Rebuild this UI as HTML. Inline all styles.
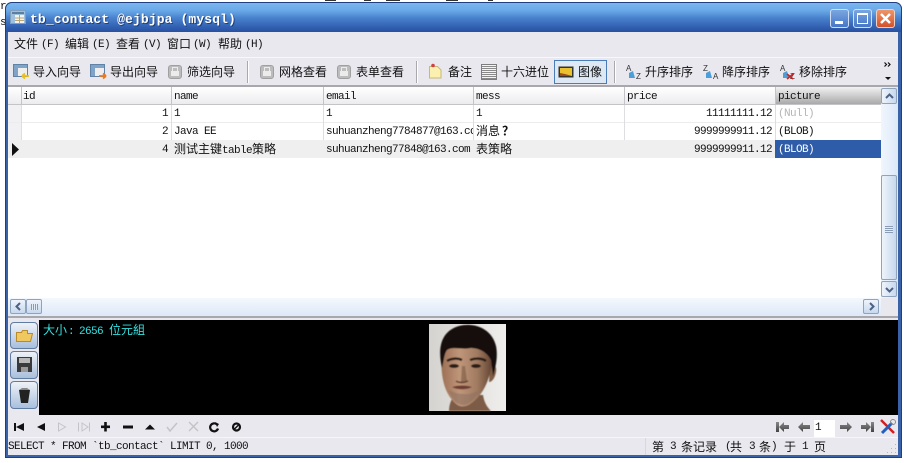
<!DOCTYPE html>
<html><head><meta charset="utf-8"><style>
html,body{margin:0;padding:0;width:904px;height:463px;overflow:hidden;background:#fff}
body{position:relative;font:12px "Liberation Mono","WenQuanYi Zen Hei","Noto Sans CJK SC",monospace;color:#111}
.a{position:absolute}
.t{position:absolute;white-space:nowrap;line-height:14px;height:14px}
.z{font-family:"WenQuanYi Zen Hei","Noto Sans CJK SC",sans-serif;font-size:12px}
.m{font-family:"Liberation Mono","WenQuanYi Zen Hei",monospace;font-size:11px;letter-spacing:-.6px}
.v{position:absolute;width:1px;background:#dedee2}
.h{position:absolute;width:1px;background:#c4c4c8;top:87px;height:17px}
.btn{position:absolute;box-sizing:border-box;border:1px solid #8fa3bd;border-radius:2px;background:linear-gradient(90deg,#eef4fb,#c7d8ee)}
.sep{position:absolute;width:1px;top:61px;height:22px;background:#a9a9ad;border-right:1px solid #fff}
svg{position:absolute;overflow:visible}
.lock{position:absolute;top:65px;width:14px;height:14px;background:#bcbcbc;border:1px solid #a0a0a0;border-radius:3px;box-sizing:border-box}
.lock:after{content:"";position:absolute;left:2px;top:5px;width:8px;height:5px;background:#ececec}
.lock:before{content:"";position:absolute;left:3px;top:1px;width:4px;height:3px;border:1px solid #ececec;border-bottom:0}
</style></head><body>
<div class="t m" style="left:0;top:0">r</div>
<div class="t m" style="left:0;top:16px">s</div>
<div class="a" style="left:325px;top:0;width:11px;height:1px;background:#333"></div>
<div class="a" style="left:364px;top:0;width:7px;height:1px;background:#333"></div>
<div class="a" style="left:386px;top:0;width:14px;height:1px;background:#333"></div>
<div class="a" style="left:446px;top:0;width:12px;height:1px;background:#333"></div>
<div class="a" style="left:488px;top:0;width:5px;height:1px;background:#333"></div>

<!-- window -->
<div class="a" style="left:5px;top:2px;width:897px;height:456px;background:#3a62a8;border-radius:7px 7px 0 0;box-shadow:0 0 0 1px #1f3f80 inset"></div>
<div class="a" style="left:6px;top:3px;width:895px;height:29px;border-radius:6px 6px 0 0;background:linear-gradient(#7bb6ee 0,#6aaae8 25%,#4a84cf 50%,#3565b6 78%,#2850a0 100%)"></div>
<div class="a" style="left:8px;top:32px;width:890px;height:423px;background:#e9e8ef"></div>

<!-- title -->
<svg style="left:10px;top:10px" width="16" height="14"><rect x=".5" y=".5" width="15" height="13" fill="#9fc0dc" stroke="#7f9fbe"/><rect x="2" y="2" width="12" height="2" fill="#5d7f9f"/><rect x="5" y="5" width="9" height="8" fill="#f4f4ef"/><path d="M5 8h9M5 10.500h9M9.500 5v8" stroke="#b9a77a"/></svg>
<div class="t" style="left:30px;top:12px;font:bold 13px 'Liberation Mono',monospace;letter-spacing:.12px;color:#fff;text-shadow:1px 1px 0 #1d3f7c">tb_contact @ejbjpa (mysql)</div>
<div class="a" style="left:830px;top:9px;width:19px;height:19px;box-sizing:border-box;border:1px solid #cfe0f5;border-radius:3px;background:linear-gradient(#7aa6e0,#4676c8)"><div class="a" style="left:4px;top:11px;width:8px;height:3px;background:#fff"></div></div>
<div class="a" style="left:853px;top:9px;width:19px;height:19px;box-sizing:border-box;border:1px solid #cfe0f5;border-radius:3px;background:linear-gradient(#7aa6e0,#4676c8)"><div class="a" style="left:3px;top:3px;width:11px;height:11px;box-sizing:border-box;border:1px solid #fff;border-top-width:2px"></div></div>
<div class="a" style="left:876px;top:9px;width:19px;height:19px;box-sizing:border-box;border:1px solid #f0d0c0;border-radius:3px;background:linear-gradient(#ee9668,#d4512a)"><svg style="left:3px;top:3px" width="11" height="11"><path d="M1 1l9 9M10 1L1 10" stroke="#fff" stroke-width="2.500"/></svg></div>

<!-- menu -->
<div class="t z" style="left:14px;top:37px">文件</div><div class="t m" style="left:41px;top:38px">(F)</div>
<div class="t z" style="left:65px;top:37px">编辑</div><div class="t m" style="left:92px;top:38px">(E)</div>
<div class="t z" style="left:116px;top:37px">查看</div><div class="t m" style="left:143px;top:38px">(V)</div>
<div class="t z" style="left:167px;top:37px">窗口</div><div class="t m" style="left:193px;top:38px">(W)</div>
<div class="t z" style="left:218px;top:37px">帮助</div><div class="t m" style="left:245px;top:38px">(H)</div>

<!-- toolbar -->
<div class="a" style="left:8px;top:57px;width:890px;height:1px;background:#f8f8fa"></div>
<svg style="left:13px;top:64px" width="17" height="16"><rect x=".5" y=".5" width="14" height="12" fill="#7fa4c8" stroke="#5f82a6"/><rect x="5" y="4" width="9" height="8" fill="#eee"/><path d="M9 12h7M9 12l3-2.500M9 12l3 2.500" stroke="#e8c020" stroke-width="1.800" fill="none"/></svg>
<div class="t z" style="left:33px;top:65px">导入向导</div>
<svg style="left:90px;top:64px" width="17" height="16"><rect x=".5" y=".5" width="14" height="12" fill="#7fa4c8" stroke="#5f82a6"/><rect x="5" y="4" width="9" height="8" fill="#eee"/><path d="M9 12h7M16 12l-3-2.500M16 12l-3 2.500" stroke="#e87a20" stroke-width="1.800" fill="none"/></svg>
<div class="t z" style="left:110px;top:65px">导出向导</div>
<div class="lock" style="left:168px"></div>
<div class="t z" style="left:187px;top:65px">筛选向导</div>
<div class="sep" style="left:247px"></div>
<div class="lock" style="left:260px"></div>
<div class="t z" style="left:279px;top:65px">网格查看</div>
<div class="lock" style="left:337px"></div>
<div class="t z" style="left:356px;top:65px">表单查看</div>
<div class="sep" style="left:416px"></div>
<svg style="left:429px;top:63px" width="13" height="16"><path d="M.5 3.500h8l3.500 3.500v8H.5z" fill="#fbf0b0" stroke="#c9b878"/><circle cx="4" cy="2.500" r="1.800" fill="#d04040"/></svg>
<div class="t z" style="left:448px;top:65px">备注</div>
<div class="a" style="left:481px;top:64px;width:16px;height:16px;box-sizing:border-box;border:1px solid #7d7d7d;background:repeating-linear-gradient(0deg,#8a8a8a 0 1px,#f4f4f4 1px 2px)"></div>
<div class="t z" style="left:501px;top:65px">十六进位</div>
<div class="a" style="left:554px;top:60px;width:53px;height:24px;box-sizing:border-box;border:1px solid #4a7cb8;background:#dde8f4"></div>
<svg style="left:558px;top:66px" width="16" height="12"><rect x=".5" y=".5" width="15" height="11" fill="#333"/><rect x="2" y="2" width="12" height="8" fill="#e8c030"/><path d="M2 10V7l5 1 7 2z" fill="#a04a18"/></svg>
<div class="t z" style="left:578px;top:65px">图像</div>
<div class="sep" style="left:614px"></div>
<svg style="left:626px;top:64px" width="17" height="16"><text x="0" y="7" font-size="8" font-family="Liberation Sans" fill="#333">A</text><text x="10" y="15" font-size="8" font-family="Liberation Sans" fill="#333">Z</text><path d="M3 9l4-2 2 7H3z" fill="#4a9fd8"/></svg>
<div class="t z" style="left:645px;top:65px">升序排序</div>
<svg style="left:703px;top:64px" width="17" height="16"><text x="0" y="7" font-size="8" font-family="Liberation Sans" fill="#333">Z</text><text x="10" y="15" font-size="8" font-family="Liberation Sans" fill="#333">A</text><path d="M3 9l4-2 2 7H3z" fill="#4a9fd8"/></svg>
<div class="t z" style="left:722px;top:65px">降序排序</div>
<svg style="left:780px;top:64px" width="17" height="16"><text x="0" y="7" font-size="8" font-family="Liberation Sans" fill="#333">A</text><text x="10" y="15" font-size="8" font-family="Liberation Sans" fill="#333">Z</text><path d="M3 9l4-2 2 7H3z" fill="#4a9fd8"/><path d="M7 10l6 5M13 10l-6 5" stroke="#d02020" stroke-width="1.600"/></svg>
<div class="t z" style="left:799px;top:65px">移除排序</div>
<svg style="left:884px;top:62px" width="10" height="18"><path d="M.5 .5l2 2-2 2M4 .5l2 2-2 2" stroke="#111" stroke-width="1.200" fill="none"/><path d="M1 15h6l-3 3z" fill="#111"/></svg>

<!-- grid -->
<div class="a" style="left:8px;top:85px;width:890px;height:2px;background:#a8a8ac"></div>
<div class="a" style="left:8px;top:87px;width:890px;height:228px;background:#fff"></div>
<div class="a" style="left:8px;top:87px;width:873px;height:17px;background:linear-gradient(#fff,#ececef)"></div>
<div class="a" style="left:775px;top:87px;width:106px;height:17px;background:linear-gradient(#f2f2f2,#a9a9a9)"></div>
<div class="a" style="left:8px;top:104px;width:873px;height:1px;background:#c4c4c8"></div>
<div class="h" style="left:21px"></div><div class="h" style="left:171px"></div><div class="h" style="left:323px"></div><div class="h" style="left:473px"></div><div class="h" style="left:624px"></div><div class="h" style="left:775px"></div>
<div class="t m" style="left:23px;top:90px">id</div><div class="t m" style="left:174px;top:90px">name</div><div class="t m" style="left:326px;top:90px">email</div><div class="t m" style="left:476px;top:90px">mess</div><div class="t m" style="left:627px;top:90px">price</div><div class="t m" style="left:778px;top:90px">picture</div>

<div class="a" style="left:8px;top:105px;width:13px;height:36px;background:#f1f1f3"></div>
<div class="a" style="left:8px;top:122px;width:873px;height:1px;background:#ececee"></div>
<div class="a" style="left:8px;top:140px;width:873px;height:18px;background:#efeff0"></div>
<div class="a" style="left:775px;top:140px;width:106px;height:18px;background:#2f5ca8"></div>
<div class="v" style="left:21px;top:105px;height:35px"></div><div class="v" style="left:171px;top:105px;height:35px"></div><div class="v" style="left:323px;top:105px;height:35px"></div><div class="v" style="left:473px;top:105px;height:35px"></div><div class="v" style="left:624px;top:105px;height:35px"></div><div class="v" style="left:775px;top:105px;height:35px"></div>
<svg style="left:12px;top:143px" width="8" height="13"><path d="M0 0l7 6.500L0 13z" fill="#111"/></svg>

<div class="t m" style="left:162px;top:107px">1</div><div class="t m" style="left:174px;top:107px">1</div><div class="t m" style="left:326px;top:107px">1</div><div class="t m" style="left:476px;top:107px">1</div><div class="t m" style="left:706px;top:107px">11111111.12</div><div class="t m" style="left:778px;top:107px;color:#b5b5b5">(Null)</div>
<div class="t m" style="left:162px;top:125px">2</div><div class="t m" style="left:174px;top:125px">Java EE</div><div class="t m" style="left:326px;top:125px;width:147px;overflow:hidden">suhuanzheng7784877@163.com</div><div class="t z" style="left:476px;top:124px">消息<span style="font-weight:bold;margin-left:2px">？</span></div><div class="t m" style="left:694px;top:125px">9999999911.12</div><div class="t m" style="left:778px;top:125px">(BLOB)</div>
<div class="t m" style="left:162px;top:143px">4</div><div class="t z" style="left:174px;top:142px">测试主键<span class="m">table</span>策略</div><div class="t m" style="left:326px;top:143px">suhuanzheng77848@163.com</div><div class="t z" style="left:476px;top:142px">表策略</div><div class="t m" style="left:694px;top:143px">9999999911.12</div><div class="t m" style="left:778px;top:143px;color:#fff">(BLOB)</div>

<!-- v scrollbar -->
<div class="a" style="left:881px;top:87px;width:17px;height:211px;background:linear-gradient(90deg,#f1f6fd,#dce8f8)"></div>
<div class="btn" style="left:881px;top:88px;width:16px;height:16px"><svg style="left:3px;top:4px" width="9" height="6"><path d="M1 5l3.500-3.500L8 5" stroke="#4d6185" stroke-width="2" fill="none"/></svg></div>
<div class="btn" style="left:881px;top:175px;width:16px;height:105px"><div class="a" style="left:3px;top:50px;width:8px;height:7px;background:repeating-linear-gradient(#8a9cb5 0 1px,#e3ecf7 1px 2px)"></div></div>
<div class="btn" style="left:881px;top:281px;width:16px;height:16px"><svg style="left:3px;top:5px" width="9" height="6"><path d="M1 1l3.500 3.500L8 1" stroke="#4d6185" stroke-width="2" fill="none"/></svg></div>

<!-- h scrollbar -->
<div class="a" style="left:8px;top:298px;width:873px;height:17px;background:linear-gradient(#f4f8fe,#dfe9f8)"></div>
<div class="a" style="left:881px;top:298px;width:17px;height:19px;background:#e9e8ef"></div>
<div class="btn" style="left:10px;top:299px;width:16px;height:15px;background:linear-gradient(#eef4fb,#c7d8ee)"><svg style="left:4px;top:2px" width="6" height="9"><path d="M5 1L1.500 4.500 5 8" stroke="#4d6185" stroke-width="2" fill="none"/></svg></div>
<div class="btn" style="left:26px;top:299px;width:16px;height:15px;background:linear-gradient(#eef4fb,#c7d8ee)"><div class="a" style="left:4px;top:4px;width:7px;height:6px;background:repeating-linear-gradient(90deg,#8a9cb5 0 1px,#e3ecf7 1px 2px)"></div></div>
<div class="btn" style="left:863px;top:299px;width:16px;height:15px;background:linear-gradient(#eef4fb,#c7d8ee)"><svg style="left:5px;top:2px" width="6" height="9"><path d="M1 1l3.500 3.500L1 8" stroke="#4d6185" stroke-width="2" fill="none"/></svg></div>

<!-- image panel -->
<div class="a" style="left:8px;top:316px;width:890px;height:2px;background:#a8a8ac"></div>
<div class="a" style="left:39px;top:320px;width:859px;height:95px;background:#000"></div>
<div class="btn" style="left:10px;top:322px;width:28px;height:27px;border-color:#5f7ca3;border-radius:4px;background:linear-gradient(#eef2f8,#a9bfdc)"><svg style="left:5px;top:6px" width="17" height="15"><path d="M.5 3.500h5l1-2h5v3h5l-2 8H.5z" fill="#f0c860" stroke="#b88a2a"/></svg></div>
<div class="btn" style="left:10px;top:351px;width:28px;height:28px;border-color:#5f7ca3;border-radius:4px;background:linear-gradient(#eef2f8,#a9bfdc)"><svg style="left:6px;top:5px" width="15" height="15"><rect width="15" height="15" fill="#3a3a3a"/><rect x="2" y="1" width="11" height="5" fill="#b8b8b8"/><rect x="4" y="10" width="7" height="5" fill="#999"/></svg></div>
<div class="btn" style="left:10px;top:381px;width:28px;height:28px;border-color:#5f7ca3;border-radius:4px;background:linear-gradient(#eef2f8,#a9bfdc)"><svg style="left:7px;top:5px" width="13" height="17"><path d="M1 3h11l-2 13H3z" fill="#222"/><path d="M1 3l3-2h5l3 2z" fill="#888"/></svg></div>
<div class="t z" style="left:43px;top:323px;color:#35e0e0">大小</div>
<div class="t m" style="left:68px;top:325px;color:#35e0e0">:</div>
<div class="t m" style="left:79px;top:325px;color:#35e0e0">2656</div>
<div class="t z" style="left:109px;top:323px;color:#35e0e0">位元組</div>

<!-- face -->
<svg style="left:429px;top:324px" width="77" height="87" viewBox="0 0 77 87">
<defs><linearGradient id="bg" x1="0" x2="1"><stop offset="0" stop-color="#d5d3cf"/><stop offset="1" stop-color="#efeeec"/></linearGradient>
<linearGradient id="sk" x1="0" x2="1"><stop offset="0" stop-color="#9c7055"/><stop offset=".35" stop-color="#c0967a"/><stop offset=".7" stop-color="#a07a60"/><stop offset="1" stop-color="#5e4030"/></linearGradient>
<filter id="b" x="-10%" y="-10%" width="120%" height="120%"><feGaussianBlur stdDeviation=".4"/></filter></defs>
<rect width="77" height="87" fill="url(#bg)"/>
<g filter="url(#b)">
<path d="M20 87c0-6 2-12 6-16h28c1 6 3 11 8 16z" fill="#7d5c46"/>
<path d="M61 42c4-3 7 0 6 6-1 6-4 10-7 10z" fill="#7e5c44"/>
<path d="M13 32c-2 18 2 38 14 48 5 4 11 3 17-2 10-8 16-20 20-42-3-10-14-14-24-14-10 0-23 0-27 10z" fill="url(#sk)"/>
<path d="M20 66c2 8 8 15 14 15 6 0 12-6 17-15-6 3-12 5-17 4-6 0-10-2-14-4z" fill="#8a7060" opacity=".55"/>
<path d="M13 44C8 22 13 7 30 2c16-4 33 3 37 20 2 10 0 20-3 30l-2-16c-4-8-12-12-20-12-10 2-18-2-24 2-3 4-3 10-5 18z" fill="#15100c"/>
<path d="M18 37c5-3 11-3 15-1M41 36c5-2 12-2 16 1" stroke="#2a1c14" stroke-width="2.400" fill="none"/>
<ellipse cx="25" cy="42" rx="5" ry="2" fill="#2a1f18"/><ellipse cx="47" cy="42" rx="5" ry="2" fill="#2a1f18"/>
<path d="M36 42l2 15c-2 2-5 2-6 1l1-16z" fill="#6e4c38" opacity=".5"/>
<path d="M27 57c3 2 8 2 12 0" stroke="#5e3c2c" stroke-width="1.500" fill="none"/>
<path d="M23 63c6-2 14-2 20 0-5 3-15 3-20 0z" fill="#6d3e32"/>
</g>
</svg>

<!-- nav -->
<svg style="left:14px;top:421px" width="235" height="12">
<path d="M0 2v8h2V2zM2 6l8-4v8z" fill="#111"/>
<path d="M23 6l8-4v8z" fill="#111"/>
<path d="M44.500 2l7 4-7 4z" fill="none" stroke="#c4c4c8"/>
<path d="M64.500 1.500v9M68 2l6 4-6 4zM75.500 1.500v9" fill="none" stroke="#c4c4c8"/>
<path d="M87 4.500h3.200V1h2.600v3.500H96v2.600h-3.200v3.400h-2.600V7.100H87z" fill="#111"/>
<rect x="109" y="4.500" width="10" height="3" fill="#111"/>
<path d="M131 8.500l5-5 5 5z" fill="#111"/>
<path d="M153 6l3 4 7-8" fill="none" stroke="#c4c4c8" stroke-width="1.500"/>
<path d="M175 1l9 9M184 1l-9 9" stroke="#c4c4c8" stroke-width="1.500"/>
<path d="M203 3.500a4 4 0 1 0 1 4" fill="none" stroke="#111" stroke-width="2.200"/><path d="M201 1l4 2-2 3z" fill="#111"/>
<circle cx="222.500" cy="6" r="3.500" fill="none" stroke="#111" stroke-width="2.200"/><path d="M220 8.500l5-5" stroke="#111" stroke-width="1.500"/>
</svg>
<svg style="left:776px;top:422px" width="100" height="11">
<defs><linearGradient id="g" x1="0" y1="0" x2="0" y2="1"><stop offset="0" stop-color="#888"/><stop offset="1" stop-color="#444"/></linearGradient></defs>
<path d="M0 0h3v10H0zM3 5l5-5v3h5v4H8v3z" fill="url(#g)"/>
<path d="M22 5l5-5v3h7v4h-7v3z" fill="url(#g)"/>
<path d="M64 3h7V0l5 5-5 5V7h-7z" fill="url(#g)"/>
<path d="M85 3h5V0l5 5-5 5V7h-5zM95 0h3v10h-3z" fill="url(#g)"/>
</svg>
<div class="a" style="left:814px;top:420px;width:21px;height:17px;background:#fff"></div>
<div class="t m" style="left:815px;top:421px">1</div>
<svg style="left:880px;top:419px" width="16" height="16"><path d="M1 1l13 13" stroke="#d02020" stroke-width="2.500"/><path d="M12 4L2 14" stroke="#2060c0" stroke-width="3"/><circle cx="13" cy="3" r="2.500" fill="none" stroke="#888"/></svg>

<!-- status -->
<div class="a" style="left:8px;top:437px;width:890px;height:1px;background:#f6f6f8"></div>
<div class="t m" style="left:8px;top:440px">SELECT * FROM `tb_contact` LIMIT 0, 1000</div>
<div class="a" style="left:645px;top:438px;width:1px;height:17px;background:#d8d8dc"></div>
<div class="t z" style="left:652px;top:440px">第</div>
<div class="t m" style="left:670px;top:440px">3</div>
<div class="t z" style="left:681px;top:440px">条记录</div>
<div class="t m" style="left:725px;top:440px">(</div>
<div class="t z" style="left:730px;top:440px">共</div>
<div class="t m" style="left:749px;top:440px">3</div>
<div class="t z" style="left:759px;top:440px">条</div>
<div class="t m" style="left:771px;top:440px">)</div>
<div class="t z" style="left:784px;top:440px">于</div>
<div class="t m" style="left:802px;top:440px">1</div>
<div class="t z" style="left:814px;top:440px">页</div>
<svg style="left:886px;top:443px" width="11" height="11"><path d="M9 1h1v1H9zM5 5h1v1H5zM9 5h1v1H9zM1 9h1v1H1zM5 9h1v1H5zM9 9h1v1H9z" fill="#b5b5b8"/></svg>
</body></html>
